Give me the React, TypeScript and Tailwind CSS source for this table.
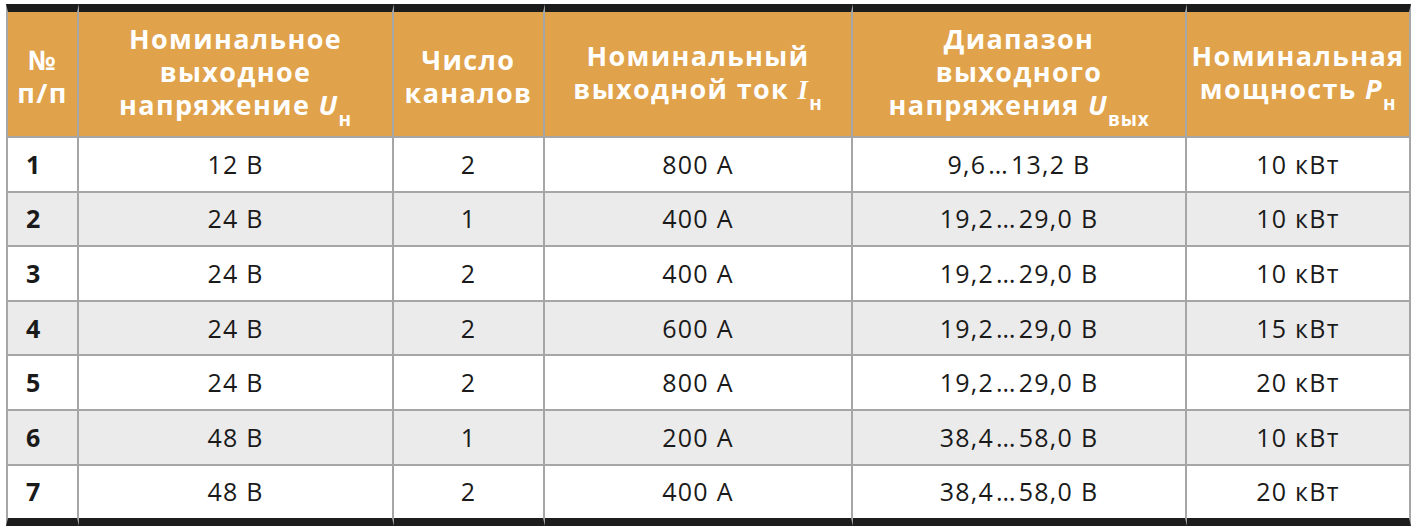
import React from 'react';

const rows = [
  ['1', '12 В', '2', '800 А', '9,6…13,2 В', '10 кВт'],
  ['2', '24 В', '1', '400 А', '19,2…29,0 В', '10 кВт'],
  ['3', '24 В', '2', '400 А', '19,2…29,0 В', '10 кВт'],
  ['4', '24 В', '2', '600 А', '19,2…29,0 В', '15 кВт'],
  ['5', '24 В', '2', '800 А', '19,2…29,0 В', '20 кВт'],
  ['6', '48 В', '1', '200 А', '38,4…58,0 В', '10 кВт'],
  ['7', '48 В', '2', '400 А', '38,4…58,0 В', '20 кВт'],
];

const Sub = ({ children }: { children: React.ReactNode }) => (
  <span className="text-[19px] leading-none align-[-11px] tracking-[0.04em]">{children}</span>
);

// range values get a slightly wider ellipsis, like in the print layout
const Cell = ({ text }: { text: string }) => {
  const parts = text.split('…');
  if (parts.length < 2) return <>{text}</>;
  return (
    <>
      {parts[0]}
      <span className="mx-[2px]">…</span>
      {parts[1]}
    </>
  );
};

const App: React.FC = () => {
  const th =
    'h-[134px] border-t-[8px] border-t-[#1c1c1c] border-b-2 border-r-2 border-[#a6a6a6] bg-[#e0a24a] text-white font-bold text-[27px] leading-[33px] tracking-[0.05em] text-center align-middle whitespace-nowrap px-0 pt-[3px]';

  return (
    <div className="min-h-screen bg-white pt-[4px] pl-[6px]" style={{ fontFamily: '"Open Sans", "Noto Sans", sans-serif' }}>
      <table className="table-fixed w-[1405px] border-separate border-spacing-0">
        <colgroup>
          <col className="w-[73px]" />
          <col className="w-[315px]" />
          <col className="w-[151px]" />
          <col className="w-[308px]" />
          <col className="w-[334px]" />
          <col className="w-[224px]" />
        </colgroup>
        <thead>
          <tr>
            <th className={`${th} border-l-2 border-l-[#a6a6a6]`}>
              №<br />п/п
            </th>
            <th className={th}>
              Номинальное
              <br />
              выходное
              <br />
              напряжение <i>U</i>
              <Sub>н</Sub>
            </th>
            <th className={th}>
              Число
              <br />
              каналов
            </th>
            <th className={th}>
              Номинальный
              <br />
              выходной ток{' '}
              <i style={{ fontFamily: '"Liberation Serif", serif' }} className="font-bold">
                I
              </i>
              <Sub>н</Sub>
            </th>
            <th className={th}>
              Диапазон
              <br />
              выходного
              <br />
              напряжения <i>U</i>
              <Sub>вых</Sub>
            </th>
            <th className={`${th} tracking-[0.03em]`}>
              Номинальная
              <br />
              мощность <i>P</i>
              <Sub>н</Sub>
            </th>
          </tr>
        </thead>
        <tbody>
          {rows.map((r, i) => {
            const last = i === rows.length - 1;
            const bg = i % 2 === 1 ? 'bg-[#ebebeb]' : 'bg-white';
            const bb = last ? 'border-b-[8px] border-b-[#1c1c1c]' : 'border-b-2 border-b-[#a6a6a6]';
            return (
              <tr key={r[0]}>
                {r.map((c, j) => (
                  <td
                    key={j}
                    className={`${bg} ${bb} ${last ? 'h-[60.6px]' : 'h-[54.6px]'} border-r-2 border-r-[#a6a6a6] ${
                      j === 0 ? 'border-l-2 border-l-[#a6a6a6] pl-[18px] text-left font-bold' : 'text-center'
                    } align-middle text-[25px] leading-none tracking-[0.05em] text-[#1a1a1a] whitespace-nowrap`}
                  >
                    <Cell text={c} />
                  </td>
                ))}
              </tr>
            );
          })}
        </tbody>
      </table>
    </div>
  );
};

export default App;
